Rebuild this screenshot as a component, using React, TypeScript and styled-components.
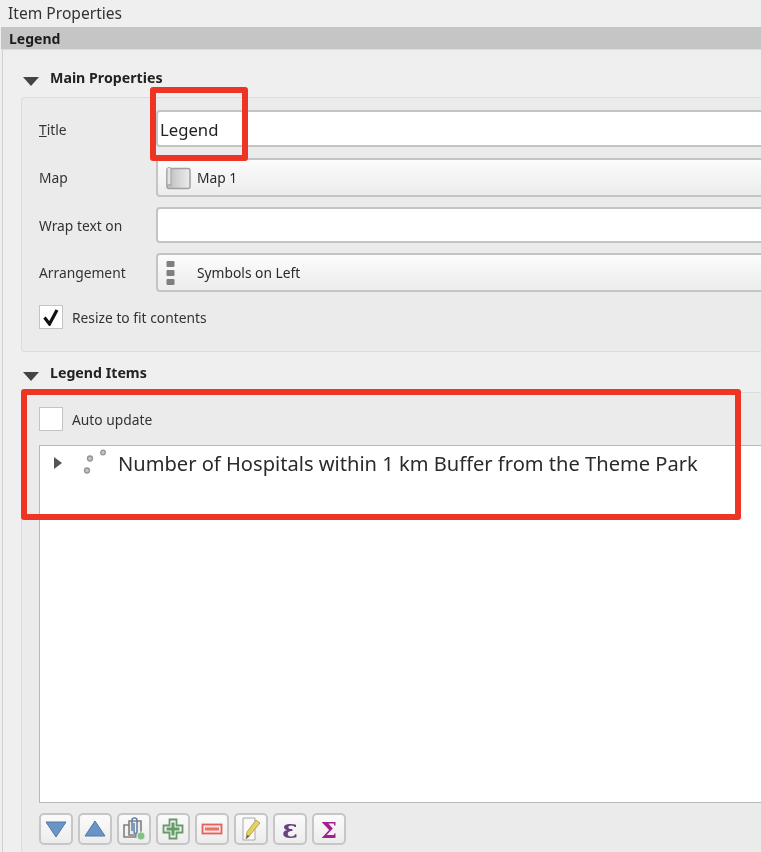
import React, {FC} from 'react';
import styled, {createGlobalStyle} from 'styled-components';

const Global = createGlobalStyle`
    html, body {
        margin: 0;
        padding: 0;
        background: #efefef;
    }
`

const Page = styled.div`
    position: relative;
    width: 761px;
    height: 852px;
    overflow: hidden;
    background: #efefef;
    color: #2a2a2a;
    font-family: "Noto Sans", "Open Sans", sans-serif;
    font-size: 13.8px;
    filter: blur(0.35px);
`

const WindowTitle = styled.div`
    height: 27px;
    padding-left: 8px;
    font-size: 15.6px;
    line-height: 26px;
    color: #333;
`

const ItemHeader = styled.div`
    height: 23px;
    margin-left: 1px;
    padding-left: 8px;
    background: #c5c5c5;
    border-bottom: 1px solid #dcdcdc;
    font-size: 14px;
    font-weight: 700;
    line-height: 23px;
    color: #1c1c1c;
    box-sizing: border-box;
`

const Body = styled.div`
    width: 800px;
    margin-left: 2px;
    padding: 17px 0 0 18px;
    border-left: 1px solid #d0d0d0;
    box-sizing: border-box;
`

const SectionHead = styled.div`
    display: flex;
    align-items: center;
    gap: 11px;
    height: 20px;
    padding-left: 2px;
    font-weight: 700;
    font-size: 14.2px;
    color: #222;
`

const Arrow = styled.span`
    width: 0;
    height: 0;
    margin-top: 8px;
    border-left: 8px solid transparent;
    border-right: 8px solid transparent;
    border-top: 9px solid #444;
`

const Group = styled.div<{$open?: boolean}>`
    display: flex;
    flex-direction: column;
    margin: 10px 0;
    padding: 12px 17px 22px;
    background: #ebebeb;
    border: 1px solid #dcdcdc;
    border-radius: 3px;
    box-sizing: border-box;
    ${p => p.$open && `
        padding-top: 14px;
        padding-bottom: 0;
        height: 520px;
    `}
`

const Row = styled.div<{$gap?: number}>`
    display: flex;
    align-items: center;
    margin-bottom: ${p => p.$gap ?? 10}px;
`

const Label = styled.div<{$drop?: boolean}>`
    width: 117px;
    flex: none;
    padding-top: ${p => (p.$drop ? 2 : 0)}px;
    color: #333;
`

const TextField = styled.div<{$h: number}>`
    flex: 1;
    height: ${p => p.$h}px;
    padding-left: 2px;
    background: #fff;
    border: 2px solid #c4c4c4;
    border-radius: 4px;
    box-sizing: border-box;
    font-size: 16.7px;
    line-height: ${p => p.$h - 2}px;
    color: #222;
`

const Combo = styled.div`
    display: flex;
    align-items: center;
    flex: 1;
    height: 39px;
    background: linear-gradient(#fcfcfc, #ececec);
    border: 2px solid #c4c4c4;
    border-radius: 4px;
    box-sizing: border-box;
`

const ComboIcon = styled.span<{$start?: boolean}>`
    display: flex;
    justify-content: ${p => (p.$start ? 'flex-start' : 'center')};
    width: 39px;
    padding-left: ${p => (p.$start ? 8 : 0)}px;
    flex: none;
    box-sizing: border-box;
`

const CheckRow = styled.div`
    display: flex;
    align-items: center;
    gap: 9px;
    color: #333;
`

const CheckBox = styled.span`
    display: flex;
    align-items: center;
    justify-content: center;
    width: 24px;
    height: 24px;
    background: #fff;
    border: 1px solid #c4c4c4;
    box-sizing: border-box;
`

const Tree = styled.div`
    height: 358px;
    margin: 14px 0 10px;
    background: #fff;
    border: 1px solid #b8b8b8;
    box-sizing: border-box;
`

const TreeRow = styled.div`
    display: flex;
    align-items: center;
    height: 34px;
    padding-left: 14px;
    font-size: 20.1px;
    color: #2b2b2b;
`

const Expander = styled.span`
    width: 0;
    height: 0;
    margin-right: 17px;
    border-top: 6.5px solid transparent;
    border-bottom: 6.5px solid transparent;
    border-left: 8px solid #555;
`

const PointsSvg = styled.svg`
    flex: none;
    margin-right: 13px;
    overflow: visible;
`

const Toolbar = styled.div`
    display: flex;
    gap: 5px;
`

const ToolButton = styled.button<{$color?: string; $size?: number}>`
    display: flex;
    align-items: center;
    justify-content: center;
    width: 34px;
    height: 32px;
    padding: 0;
    background: linear-gradient(#fbfbfb, #ececec);
    border: 2px solid #c6c6c6;
    border-radius: 5px;
    box-sizing: border-box;
    font-family: "DejaVu Serif", "Liberation Serif", serif;
    font-size: ${p => p.$size ?? 21}px;
    font-weight: 700;
    line-height: 1;
    color: ${p => p.$color ?? '#333'};
`

const Highlight = styled.div<{$x: number; $y: number; $w: number; $h: number}>`
    position: absolute;
    left: ${p => p.$x}px;
    top: ${p => p.$y}px;
    width: ${p => p.$w}px;
    height: ${p => p.$h}px;
    border: 6px solid #ee3524;
    border-radius: 3px;
    box-sizing: border-box;
`

const MapIcon = () => (
    <svg width="26" height="24" viewBox="0 0 26 24">
        <defs>
            <linearGradient id="mapFill" x1="0" x2="1" y1="0" y2="0">
                <stop offset="0" stopColor="#bdbdbd"/>
                <stop offset="1" stopColor="#ececec"/>
            </linearGradient>
        </defs>
        <rect x="2" y="2.5" width="23" height="20" rx="2" fill="url(#mapFill)" stroke="#a0a0a0" strokeWidth="1.5"/>
        <path d="M2 3c0-2 4-2 4 0v17c0-2-4-2-4 0z" fill="#e4e4e4" stroke="#a0a0a0"/>
    </svg>
)

const ArrangeIcon = () => (
    <svg width="9" height="24" viewBox="0 0 9 24" fill="#7f7f7f">
        <rect x="0.5" y="0" width="8" height="6" rx="1"/>
        <rect x="0.5" y="9" width="8" height="6" rx="1"/>
        <rect x="0.5" y="18" width="8" height="6" rx="1"/>
    </svg>
)

const PointsIcon = () => (
    <PointsSvg width="26" height="26" viewBox="0 0 26 26">
        <g fill="#c4c4c4" stroke="#949494" strokeWidth="1.3">
            <circle cx="24" cy="2.5" r="2.3"/>
            <circle cx="11" cy="8.5" r="2.5"/>
            <circle cx="8" cy="20.5" r="2.5"/>
        </g>
    </PointsSvg>
)

const CheckMark = () => (
    <svg width="18" height="18" viewBox="0 0 18 18">
        <path d="M2.5 9.5 7.5 16 15 2" fill="none" stroke="#111" strokeWidth="3.2"/>
    </svg>
)

const DownIcon = () => (
    <svg width="22" height="18" viewBox="0 0 22 18">
        <path d="M1 2h20L11 17z" fill="#6a94c4" stroke="#5078a8"/>
    </svg>
)

const UpIcon = () => (
    <svg width="22" height="18" viewBox="0 0 22 18">
        <path d="M1 16h20L11 1z" fill="#6a94c4" stroke="#5078a8"/>
    </svg>
)

const GroupIcon = () => (
    <svg width="24" height="24" viewBox="0 0 24 24" fill="none">
        <path d="M7 8H2v12h12v-2" stroke="#808080" strokeWidth="1.6"/>
        <path d="M7 4h12v14H7z" fill="#ececec" stroke="#808080" strokeWidth="1.6"/>
        <path d="M10 14V3q0-2 2.500-2T15 3v12q0 1.500-1.500 1.500T12 15V6" stroke="#5d7fa8" strokeWidth="1.5"/>
        <circle cx="19" cy="19" r="4" fill="#86c086" stroke="#dcefdc" strokeWidth="1.2"/>
    </svg>
)

const PlusIcon = () => (
    <svg width="22" height="22" viewBox="0 0 22 22">
        <path d="M7.500 1.500h7v6h6v7h-6v6h-7v-6h-6v-7h6z" fill="#eef6ee" stroke="#669a6a" strokeWidth="1.8"/>
        <path d="M11 4.500v13M4.500 11h13" stroke="#669a6a" strokeWidth="3"/>
    </svg>
)

const MinusIcon = () => (
    <svg width="22" height="12" viewBox="0 0 22 12">
        <rect x="1.500" y="1.500" width="19" height="9" fill="#fbe3e1" stroke="#e4625a" strokeWidth="1.8"/>
        <rect x="4" y="4.500" width="14" height="3" fill="#ea7068"/>
    </svg>
)

const EditIcon = () => (
    <svg width="22" height="24" viewBox="0 0 22 24">
        <path d="M3 1h12v22H3z" fill="#fafafa" stroke="#a8a8a8"/>
        <path d="M6 22l1-7L16 3l4 3-10 12z" fill="#e8cf62" stroke="#b5a658"/>
        <path d="M6 22l1-4 3 1z" fill="#666"/>
    </svg>
)

const buttons = [
    {key: 'down', icon: <DownIcon/>},
    {key: 'up', icon: <UpIcon/>},
    {key: 'group', icon: <GroupIcon/>},
    {key: 'add', icon: <PlusIcon/>},
    {key: 'remove', icon: <MinusIcon/>},
    {key: 'edit', icon: <EditIcon/>},
    {key: 'expression', icon: 'ε', color: '#68407f', size: 26},
    {key: 'sum', icon: 'Σ', color: '#a0208f', size: 23},
]

const App: FC = () => {
    return (
        <Page>
            <Global/>
            <WindowTitle>Item Properties</WindowTitle>
            <ItemHeader>Legend</ItemHeader>
            <Body>
                <SectionHead><Arrow/>Main Properties</SectionHead>
                <Group>
                    <Row $gap={11}>
                        <Label $drop><u>T</u>itle</Label>
                        <TextField $h={37}>Legend</TextField>
                    </Row>
                    <Row>
                        <Label>Map</Label>
                        <Combo>
                            <ComboIcon><MapIcon/></ComboIcon>
                            Map 1
                        </Combo>
                    </Row>
                    <Row>
                        <Label>Wrap text on</Label>
                        <TextField $h={36}/>
                    </Row>
                    <Row $gap={13}>
                        <Label>Arrangement</Label>
                        <Combo>
                            <ComboIcon $start><ArrangeIcon/></ComboIcon>
                            Symbols on Left
                        </Combo>
                    </Row>
                    <CheckRow>
                        <CheckBox><CheckMark/></CheckBox>
                        Resize to fit contents
                    </CheckRow>
                </Group>
                <SectionHead><Arrow/>Legend Items</SectionHead>
                <Group $open>
                    <CheckRow>
                        <CheckBox/>
                        Auto update
                    </CheckRow>
                    <Tree>
                        <TreeRow>
                            <Expander/>
                            <PointsIcon/>
                            Number of Hospitals within 1 km Buffer from the Theme Park
                        </TreeRow>
                    </Tree>
                    <Toolbar>
                        {buttons.map(b => (
                            <ToolButton key={b.key} $color={b.color} $size={b.size}>{b.icon}</ToolButton>
                        ))}
                    </Toolbar>
                </Group>
            </Body>
            <Highlight $x={150} $y={87} $w={98} $h={74}/>
            <Highlight $x={21} $y={389} $w={720} $h={131}/>
        </Page>
    );
};

export default App;
